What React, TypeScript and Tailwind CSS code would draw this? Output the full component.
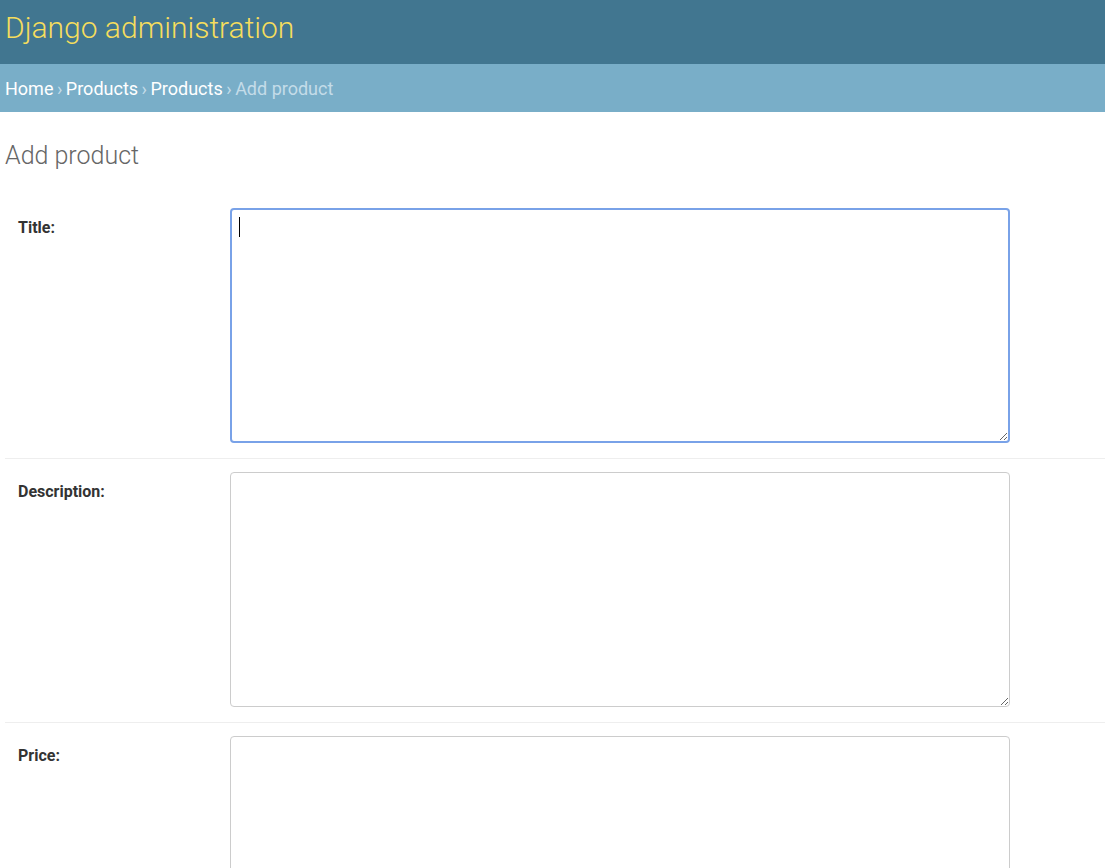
import React from "react";

const fields = [
    { id: "title", label: "Title:", focused: true },
    { id: "description", label: "Description:", focused: false },
    { id: "price", label: "Price:", focused: false },
];

function FormRow({ label, focused }: { label: string; focused: boolean }) {
    return (
        <div className="flex border-b border-[#eee] pt-[13px] pb-[15px]">
            <label className="w-[225px] shrink-0 pl-[13px] pt-[12px] text-[16px] leading-none font-bold text-[#333]">
                {label}
            </label>
            <div className="relative">
                <textarea
                    readOnly
                    className={`block w-[780px] h-[235px] rounded-[4px] bg-white outline-none ${
                        focused
                            ? "border-2 border-[#79a2e8]"
                            : "border border-[#ccc]"
                    }`}
                />
                {focused ? (
                    <div className="absolute left-[9px] top-[9px] w-px h-[20px] bg-black" />
                ) : null}
            </div>
        </div>
    );
}

export default function App() {
    return (
        <div className="min-h-screen bg-white" style={{ fontFamily: "Roboto, 'Liberation Sans', sans-serif" }}>
            <div className="h-[64px] bg-[#417690] px-[5px] pt-[13px]">
                <h1 className="text-[30px] leading-none font-light text-[#f5dd5d]">
                    Django administration
                </h1>
            </div>
            <div className="h-[48px] bg-[#79aec8] px-[5px] pt-[1px] flex items-center text-[18px] leading-none text-[#c4dce8]">
                <a className="text-white">Home</a>
                <span className="mx-[3.5px]">›</span>
                <a className="text-white">Products</a>
                <span className="mx-[3.5px]">›</span>
                <a className="text-white">Products</a>
                <span className="mx-[3.5px]">›</span>
                <span>Add product</span>
            </div>
            <div className="pl-[5px]">
                <h2 className="mt-[31px] text-[25px] leading-none font-light text-[#666]">
                    Add product
                </h2>
                <div className="mt-[27px]">
                    {fields.map(f => (
                        <FormRow key={f.id} label={f.label} focused={f.focused} />
                    ))}
                </div>
            </div>
        </div>
    );
}
